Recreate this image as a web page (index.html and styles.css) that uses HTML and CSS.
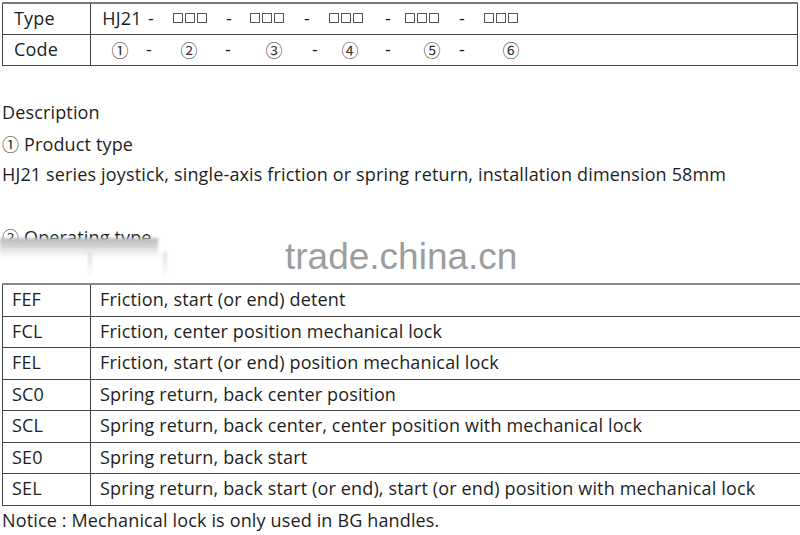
FILE: index.html
```html
<!DOCTYPE html>
<html>
<head>
<meta charset="utf-8">
<link rel="stylesheet" href="styles.css">
</head>
<body>
<div class="page">
  <table class="spec">
    <tr>
      <td class="label">Type</td>
      <td class="val">
        <div class="segs type-segs">
          <span class="seg">HJ21</span><span class="seg">-</span>
          <span class="seg"><i class="boxes"><b></b><b></b><b></b></i></span><span class="seg">-</span>
          <span class="seg"><i class="boxes"><b></b><b></b><b></b></i></span><span class="seg">-</span>
          <span class="seg"><i class="boxes"><b></b><b></b><b></b></i></span><span class="seg">-</span>
          <span class="seg"><i class="boxes"><b></b><b></b><b></b></i></span><span class="seg">-</span>
          <span class="seg"><i class="boxes"><b></b><b></b><b></b></i></span>
        </div>
      </td>
    </tr>
    <tr>
      <td class="label">Code</td>
      <td class="val">
        <div class="segs code-segs">
          <span class="seg circ">①</span><span class="seg">-</span>
          <span class="seg circ">②</span><span class="seg">-</span>
          <span class="seg circ">③</span><span class="seg">-</span>
          <span class="seg circ">④</span><span class="seg">-</span>
          <span class="seg circ">⑤</span><span class="seg">-</span>
          <span class="seg circ">⑥</span>
        </div>
      </td>
    </tr>
  </table>

  <div class="desc">
    <p class="blank"></p>
    <p>Description</p>
    <p><span class="circ-s">①</span> Product type</p>
    <p>HJ21 series joystick, single-axis friction or spring return, installation dimension 58mm</p>
    <p class="blank"></p>
    <div class="op">
      <p><span class="circ-s">②</span> Operating type</p>
      <div class="smudge"></div>
    </div>
  </div>

  <div class="band">
    <div class="streak s1"></div>
    <div class="streak s2"></div>
    <div class="watermark">trade.china.cn</div>
  </div>

  <table class="ops">
    <tr><td class="code">FEF</td><td>Friction, start (or end) detent</td></tr>
    <tr><td class="code">FCL</td><td>Friction, center position mechanical lock</td></tr>
    <tr><td class="code">FEL</td><td>Friction, start (or end) position mechanical lock</td></tr>
    <tr><td class="code">SC0</td><td>Spring return, back center position</td></tr>
    <tr><td class="code">SCL</td><td>Spring return, back center, center position with mechanical lock</td></tr>
    <tr><td class="code">SE0</td><td>Spring return, back start</td></tr>
    <tr><td class="code">SEL</td><td>Spring return, back start (or end), start (or end) position with mechanical lock</td></tr>
  </table>
  <p class="notice">Notice : Mechanical lock is only used in BG handles.</p>
</div>
</body>
</html>
```

FILE: styles.css
```css
html, body {
  margin: 0;
  padding: 0;
  background: #fff;
}
body {
  font-family: "Open Sans", "Noto Sans", sans-serif;
  font-size: 18px;
  letter-spacing: 0.15px;
  color: #1e1e1e;
  width: 800px;
  height: 535px;
  overflow: hidden;
}
.page {
  padding-top: 2px;
}
table {
  border-collapse: collapse;
}
.spec {
  margin-left: 2px;
  width: 796px;
  border: 1px solid #555;
  border-top: 2px solid #777;
}
.spec td {
  border: 1px solid #444;
  height: 28px;
  padding: 0 0 2px 0;
}
.spec .label {
  width: 76px;
  padding-left: 11px;
}
.segs {
  display: grid;
  align-items: center;
}
.type-segs {
  grid-template-columns: 31px 29px 39px 39px 38px 40px 39px 42px 34px 40px 39px;
}
.code-segs {
  grid-template-columns: 29px 29px 40px 39px 46px 41px 35px 38px 44px 30px 49px;
}
.seg {
  justify-self: end;
  width: 0;
  display: flex;
  justify-content: center;
  white-space: nowrap;
}
.circ {
  font-family: "Noto Sans CJK JP", "DejaVu Sans", sans-serif;
  font-size: 17px;
  color: #333;
}
.boxes {
  display: flex;
  gap: 2px;
}
.boxes b {
  display: block;
  width: 8px;
  height: 8px;
  border: 1px solid #555;
}
.desc p {
  margin: 0;
  height: 31px;
  line-height: 31px;
  padding-left: 2px;
  white-space: nowrap;
}
.circ-s {
  font-family: "Noto Sans CJK JP", "DejaVu Sans", sans-serif;
  font-size: 17px;
  color: #333;
}
.op {
  position: relative;
  height: 31px;
}
.smudge {
  position: absolute;
  left: 0;
  top: 17px;
  width: 158px;
  height: 20px;
  background: linear-gradient(to bottom, #b8b8b8 0%, #cfcfcf 35%, #ececec 70%, #fff 100%);
  filter: blur(1.5px);
}
.band {
  position: relative;
  height: 31px;
}
.streak {
  position: absolute;
  top: 0;
  width: 4px;
  height: 26px;
  background: linear-gradient(to bottom, #ddd, #fff);
  filter: blur(1.5px);
}
.s1 { left: 88px; }
.s2 { left: 163px; }
.watermark {
  position: absolute;
  left: 285px;
  top: -16px;
  font-family: "Liberation Sans", Arial, sans-serif;
  font-size: 37px;
  letter-spacing: 0;
  color: #9d9d9d;
  white-space: nowrap;
}
.ops {
  margin-left: 2px;
  width: 810px;
  border-top: 2px solid #888;
  border-left: 1px solid #444;
}
.ops td {
  border-bottom: 1px solid #444;
  height: 28.5px;
  padding: 0 0 2px 9px;
  white-space: nowrap;
}
.ops .code {
  width: 78px;
  border-right: 1px solid #444;
}
.notice {
  margin: 0;
  padding-left: 2px;
  line-height: 29px;
}
```
